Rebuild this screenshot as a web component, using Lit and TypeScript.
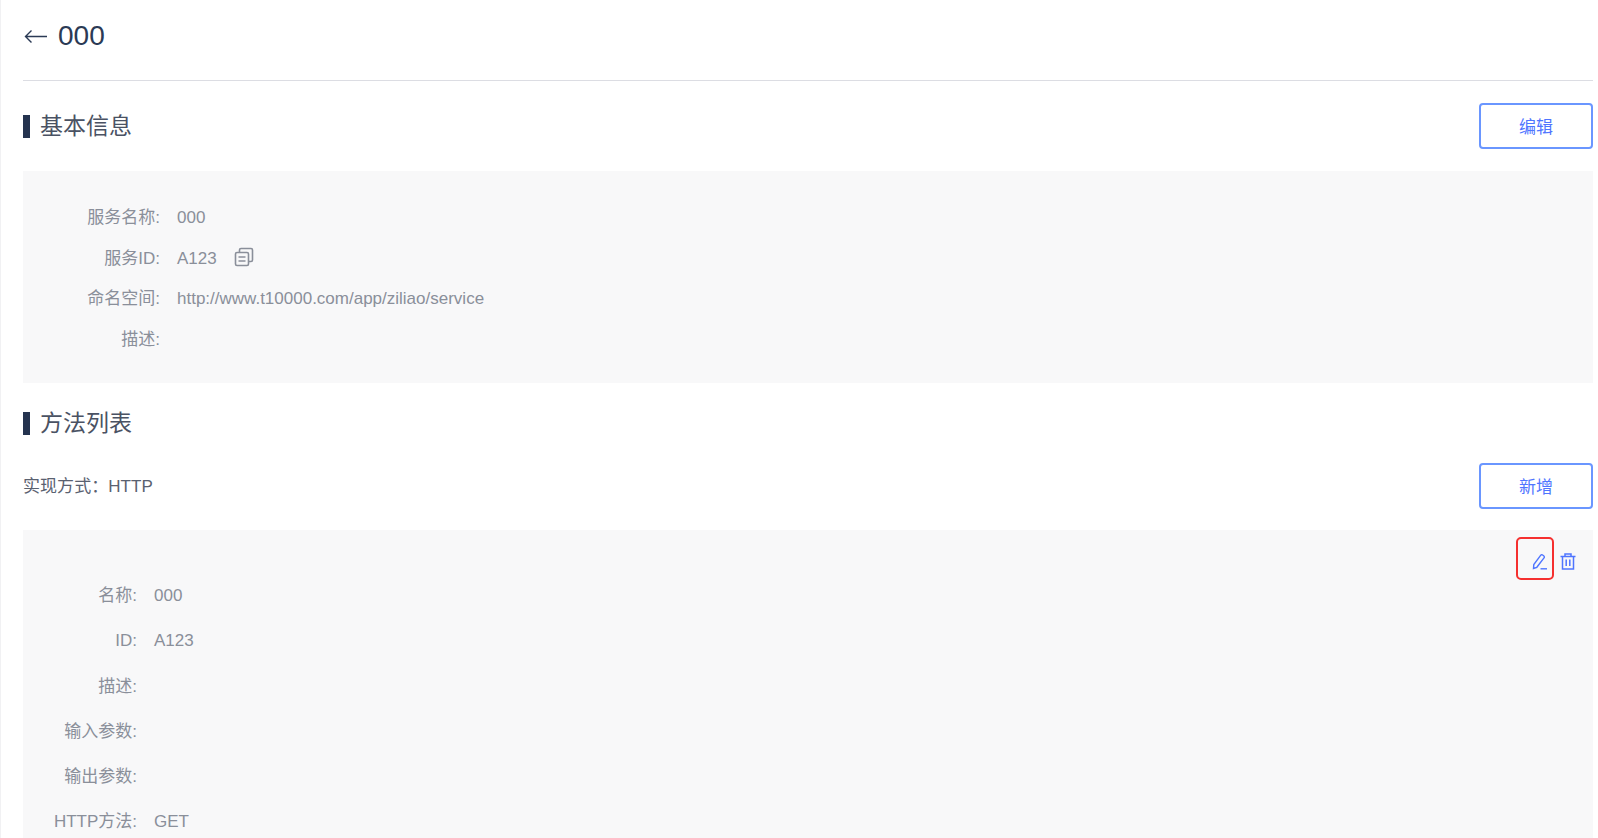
import { LitElement, html, css } from "lit";
import { customElement } from "lit/decorators.js";

@customElement("app-root")
export class AppRoot extends LitElement {
  static styles = css`
    :host {
      display: block;
      height: 838px;
      overflow: hidden;
      box-sizing: border-box;
      background: #fff;
      border-left: 1px solid #f1f1f3;
      padding: 0 5px 0 22px;
      font-family: "Liberation Sans", "Noto Sans CJK SC", sans-serif;
      font-size: 17px;
      color: #8a8f9a;
    }
    .head {
      height: 81px;
      box-sizing: border-box;
      border-bottom: 1px solid #dcdde3;
      display: flex;
      align-items: center;
      gap: 11px;
      padding-bottom: 8px;
      color: #2b3a55;
      font-size: 28px;
    }
    .head svg { width: 23px; height: 15px; margin: 1px 0 0 1px; }
    .section {
      display: flex;
      align-items: center;
      height: 46px;
      margin-top: 22px;
    }
    .section.second { margin-top: 18px; height: 44px; }
    .bar { width: 7px; height: 23px; background: #25334f; margin-right: 10px; }
    .title { font-size: 23px; color: #4a5263; line-height: 1; }
    .spacer { flex: 1; }
    .btn {
      box-sizing: border-box;
      width: 114px;
      height: 46px;
      border: 2px solid #6a96ff;
      border-radius: 4px;
      background: #fff;
      color: #4f75ff;
      font: inherit;
      font-size: 17px;
      padding: 0 0 2px;
    }
    .panel { background: #f8f8f9; margin-top: 22px; }
    .info { height: 212px; box-sizing: border-box; padding-top: 27px; }
    .info .row { line-height: 40.7px; height: 40.7px; grid-template-columns: 137px auto; }
    .row {
      display: grid;
      align-items: baseline;
      column-gap: 17px;
      justify-content: start;
    }
    .label { text-align: right; white-space: nowrap; }
    .value { display: flex; align-items: center; gap: 17px; }
    .value svg { width: 20px; height: 20px; color: #8a8f9a; margin-bottom: 4px; }
    .impl {
      display: flex;
      align-items: center;
      justify-content: space-between;
      height: 46px;
      margin-top: 18px;
      color: #5a6170;
    }
    .impl span { padding-bottom: 4px; letter-spacing: 0.05px; }
    .method { margin-top: 21px; height: 330px; padding-top: 7px; box-sizing: border-box; }
    .tools { display: flex; justify-content: flex-end; align-items: center; height: 43px; padding-right: 17px; gap: 6px; }
    .edit {
      box-sizing: border-box;
      width: 38px;
      height: 43px;
      border: 2px solid #f5302f;
      border-radius: 5px;
      display: flex;
      align-items: center;
      justify-content: flex-end;
      padding: 5px 4px 0 0;
    }
    .tools svg { width: 16px; height: 17px; color: #4f75ff; display: block; }
    .tools > svg { margin-top: 5px; }
    .method .row { line-height: 45.3px; height: 45.3px; grid-template-columns: 114px auto; }
    .method .rows { margin-top: -7px; }
  `;

  render() {
    const info = [
      ["服务名称:", "000"],
      ["服务ID:", "A123"],
      ["命名空间:", "http://www.t10000.com/app/ziliao/service"],
      ["描述:", ""],
    ];
    const method = [
      ["名称:", "000"],
      ["ID:", "A123"],
      ["描述:", ""],
      ["输入参数:", ""],
      ["输出参数:", ""],
      ["HTTP方法:", "GET"],
    ];
    return html`
      <div class="head">
        <svg viewBox="0 0 23 15" fill="none" stroke="currentColor" stroke-width="1.4">
          <path d="M23 7.500H1.500M7.500 1.500L1.500 7.500L7.500 13.500" />
        </svg>
        <span>000</span>
      </div>
      <div class="section">
        <span class="bar"></span><span class="title">基本信息</span><span class="spacer"></span>
        <button class="btn">编辑</button>
      </div>
      <div class="panel info">
        ${info.map(
          ([l, v], i) => html`<div class="row">
            <span class="label">${l}</span>
            <span class="value"
              >${v}${i === 1
                ? html`<svg viewBox="0 0 20 20" fill="none" stroke="currentColor" stroke-width="1.6">
                    <rect x="1.500" y="5.500" width="13" height="13" rx="1.500" />
                    <path d="M5.500 5.500V3a1.500 1.500 0 0 1 1.500-1.500h10A1.500 1.500 0 0 1 18.500 3v10a1.500 1.500 0 0 1-1.500 1.500h-2.500" />
                    <path d="M4.500 10h7M4.500 14h7" />
                  </svg>`
                : ""}</span
            >
          </div>`
        )}
      </div>
      <div class="section second">
        <span class="bar"></span><span class="title">方法列表</span>
      </div>
      <div class="impl">
        <span>实现方式\uFF1AHTTP</span>
        <button class="btn">新增</button>
      </div>
      <div class="panel method">
        <div class="tools">
          <span class="edit">
            <svg viewBox="0 0 16 17" fill="none" stroke="currentColor" stroke-width="1.4">
              <path d="M1.500 15.500L1.800 11.500L8.800 2.200a1.300 1.300 0 0 1 1.900-.2l1.200 1a1.300 1.300 0 0 1 .1 1.900L4.800 14.300z" />
              <path d="M8.500 15.800h6.500" />
            </svg>
          </span>
          <svg viewBox="0 0 16 17" fill="none" stroke="currentColor" stroke-width="1.500">
            <path d="M.5 3.500h15M5 3.500V1h6v2.500M2.500 3.500V16h11V3.500M6.200 6.500v6.500M9.800 6.500v6.500" />
          </svg>
        </div>
        <div class="rows">
          ${method.map(
            ([l, v]) => html`<div class="row">
              <span class="label">${l}</span><span class="value">${v}</span>
            </div>`
          )}
        </div>
      </div>
    `;
  }
}
